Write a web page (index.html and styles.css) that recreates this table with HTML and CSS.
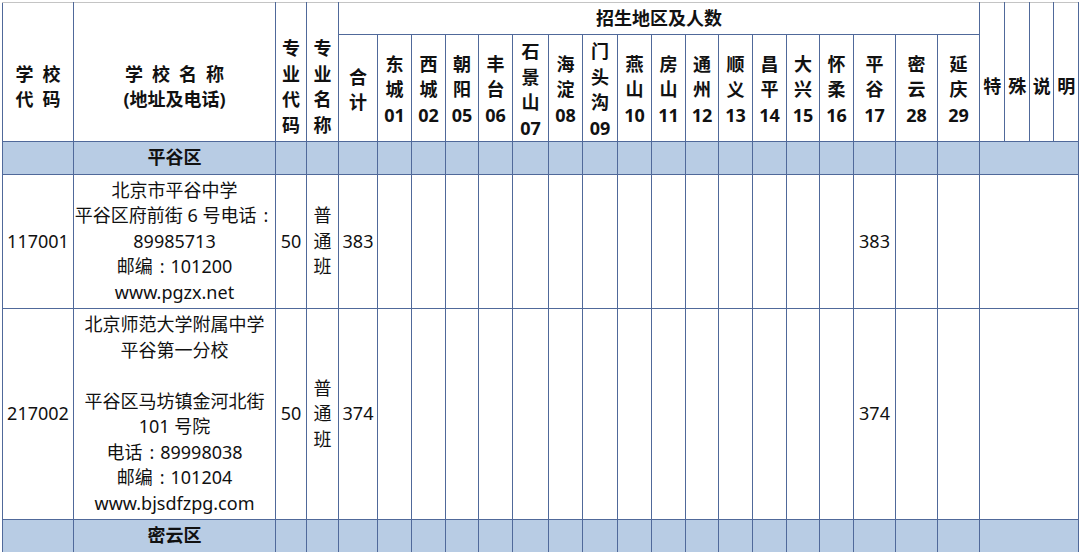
FILE: index.html
```html
<!DOCTYPE html>
<html lang="zh">
<head>
<meta charset="utf-8">
<title>招生计划</title>
<link rel="stylesheet" href="styles.css">
</head>
<body>
<table class="plan">
<colgroup>
<col class="w71"><col class="w202"><col class="w31"><col class="w32"><col class="w39">
<col class="w34"><col class="w34"><col class="w33"><col class="w34"><col class="w36"><col class="w34"><col class="w35"><col class="w34"><col class="w34"><col class="w33"><col class="w34"><col class="w34"><col class="w33"><col class="w34"><col class="w42"><col class="w42"><col class="w42">
<col class="w25"><col class="w25"><col class="w24"><col class="w25">
</colgroup>
<thead>
<tr class="h1">
<th rowspan="2" class="rs">学&#8194;校<br>代&#8194;码</th>
<th rowspan="2" class="rs">学&#8194;校&#8194;名&#8194;称<br>(地址及电话)</th>
<th rowspan="2" class="rs">专<br>业<br>代<br>码</th>
<th rowspan="2" class="rs">专<br>业<br>名<br>称</th>
<th colspan="18" class="title">招生地区及人数</th>
<th rowspan="2" class="rs">特</th>
<th rowspan="2" class="rs">殊</th>
<th rowspan="2" class="rs">说</th>
<th rowspan="2" class="rs">明</th>
</tr>
<tr class="h2">
<th>合<br>计</th>
<th>东<br>城<br>01</th>
<th>西<br>城<br>02</th>
<th>朝<br>阳<br>05</th>
<th>丰<br>台<br>06</th>
<th>石<br>景<br>山<br>07</th>
<th>海<br>淀<br>08</th>
<th>门<br>头<br>沟<br>09</th>
<th>燕<br>山<br>10</th>
<th>房<br>山<br>11</th>
<th>通<br>州<br>12</th>
<th>顺<br>义<br>13</th>
<th>昌<br>平<br>14</th>
<th>大<br>兴<br>15</th>
<th>怀<br>柔<br>16</th>
<th>平<br>谷<br>17</th>
<th>密<br>云<br>28</th>
<th>延<br>庆<br>29</th>
</tr>
</thead>
<tbody>
<tr class="district">
<td></td><td class="dname">平谷区</td>
<td></td><td></td><td></td>
<td></td><td></td><td></td><td></td><td></td><td></td><td></td><td></td><td></td><td></td><td></td><td></td><td></td><td></td><td></td><td></td><td></td>
<td colspan="4"></td>
</tr>
<tr class="r1">
<td>117001</td>
<td>北京市平谷中学<br>平谷区府前街 6 号电话<span class="colon">:</span><br>89985713<br>邮编<span class="colon">:</span>101200<br>www.pgzx.net</td>
<td>50</td>
<td>普<br>通<br>班</td>
<td>383</td>
<td></td><td></td><td></td><td></td><td></td><td></td><td></td><td></td><td></td><td></td><td></td><td></td><td></td><td></td>
<td>383</td><td></td><td></td>
<td colspan="4"></td>
</tr>
<tr class="r2">
<td>217002</td>
<td>北京师范大学附属中学<br>平谷第一分校<br>&nbsp;<br>平谷区马坊镇金河北街<br>101 号院<br>电话<span class="colon">:</span>89998038<br>邮编<span class="colon">:</span>101204<br>www.bjsdfzpg.com</td>
<td>50</td>
<td>普<br>通<br>班</td>
<td>374</td>
<td></td><td></td><td></td><td></td><td></td><td></td><td></td><td></td><td></td><td></td><td></td><td></td><td></td><td></td>
<td>374</td><td></td><td></td>
<td colspan="4"></td>
</tr>
<tr class="district">
<td></td><td class="dname">密云区</td>
<td></td><td></td><td></td>
<td></td><td></td><td></td><td></td><td></td><td></td><td></td><td></td><td></td><td></td><td></td><td></td><td></td><td></td><td></td><td></td><td></td>
<td colspan="4"></td>
</tr>
</tbody>
</table>
</body>
</html>
```
FILE: styles.css
```css
html, body {
  margin: 0;
  padding: 0;
  background: #ffffff;
}

body {
  padding: 2px 0 0 2px;
  font-family: "Noto Sans", "Noto Sans CJK SC", sans-serif;
  color: #111111;
}

.plan {
  border-collapse: collapse;
  table-layout: fixed;
  width: 1076px;
  font-size: 18px;
  line-height: 25.5px;
  border-top: 1px solid #c4c4c4;
  border-left: 1px solid #b0b0b0;
}

.w71 { width: 71px; }
.w202 { width: 202px; }
.w31 { width: 31px; }
.w32 { width: 32px; }
.w39 { width: 39px; }
.w33 { width: 33px; }
.w34 { width: 34px; }
.w35 { width: 35px; }
.w36 { width: 36px; }
.w42 { width: 42px; }
.w24 { width: 24px; }
.w25 { width: 25px; }

.plan th,
.plan td {
  border: 1px solid #50699a;
  padding: 0;
  text-align: center;
  vertical-align: middle;
  overflow: visible;
  white-space: nowrap;
}

.plan th {
  font-weight: 700;
  font-family: "Noto Sans", "Noto Sans CJK SC", sans-serif;
  color: #111111;
}

.plan thead tr.h1 th {
  border-top: 1px solid #c4c4c4;
}

.plan th.rs {
  padding-top: 30px;
}

.h1 { height: 32px; }
.h1 .title { height: 31px; }
.h2 th { height: 102px; padding-top: 4px; }

.district td {
  background: #b8cce4;
  height: 32px;
}

.district .dname {
  font-weight: 700;
}

.colon {
  padding: 0 6px 0 7px;
}

.r1 td { height: 133px; }
.r2 td { height: 210px; }
```
